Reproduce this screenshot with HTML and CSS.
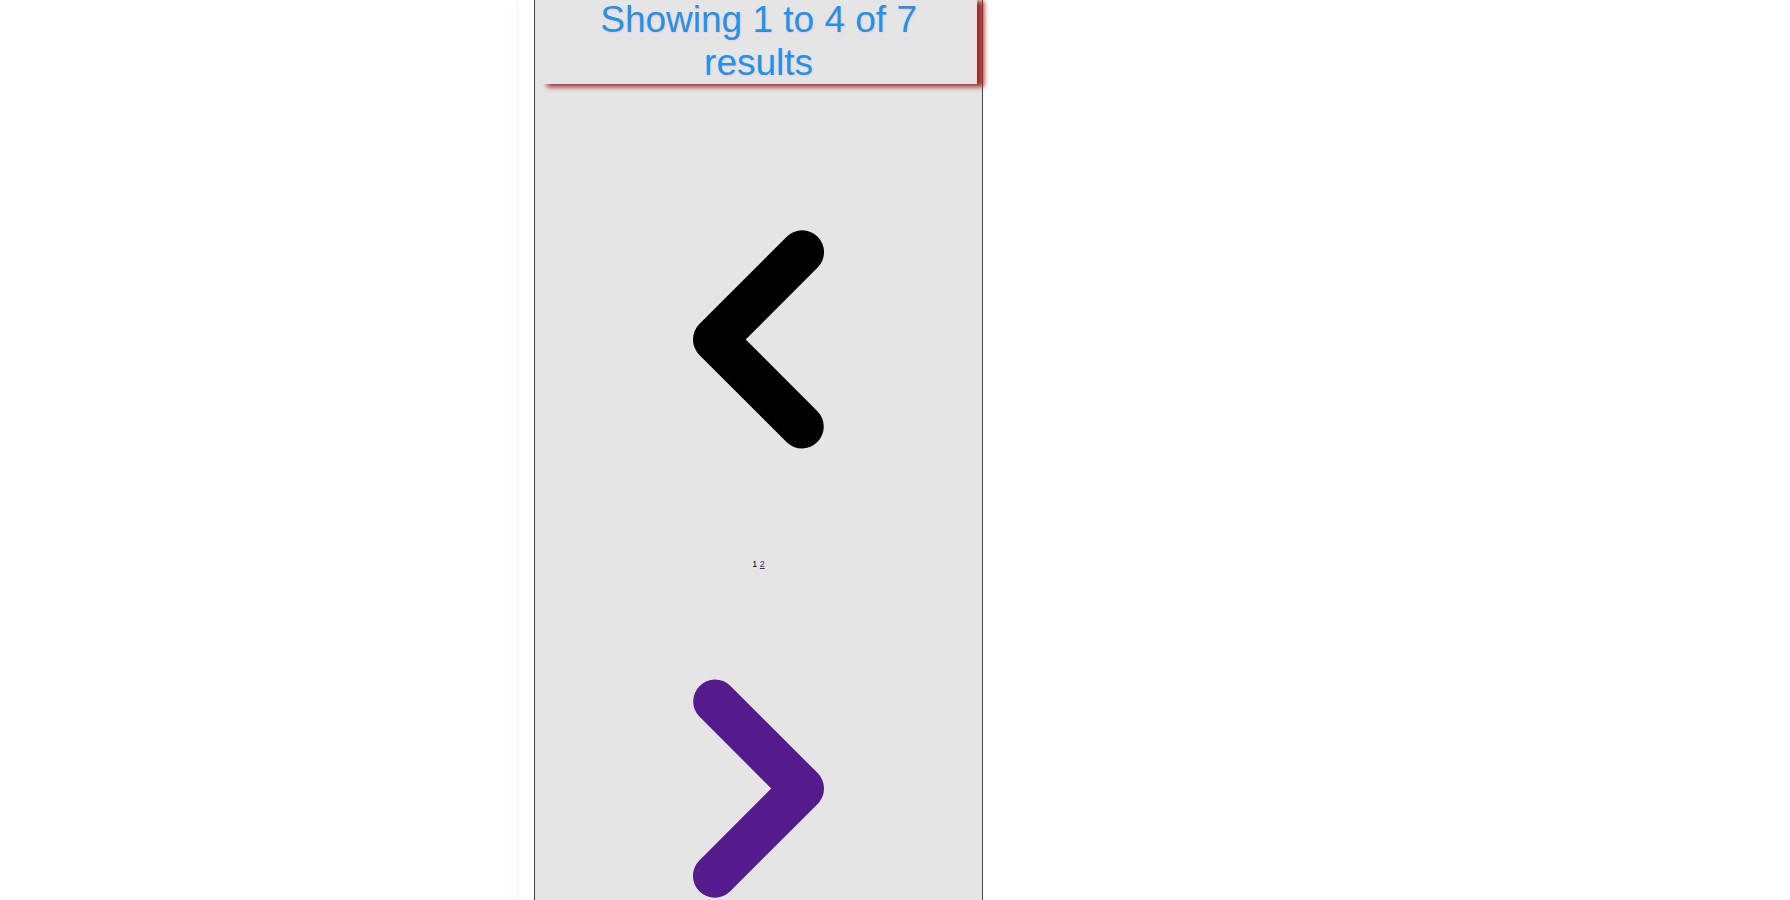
FILE: index.html
```html
<!DOCTYPE html>
<html lang="en">
<head>
<meta charset="utf-8">
<title>Results</title>
<link rel="stylesheet" href="styles.css">
</head>
<body>
<main class="page">
<nav class="pagination" aria-label="Pagination">
<p class="summary">Showing 1 to 4 of 7 results</p>
<span class="arrow" aria-disabled="true"><svg viewBox="0 0 20 20" fill="currentColor" aria-hidden="true"><path d="M12.707 5.293a1 1 0 010 1.414L9.414 10l3.293 3.293a1 1 0 01-1.414 1.414l-4-4a1 1 0 010-1.414l4-4a1 1 0 011.414 0z"/></svg></span>
<div class="numbers"><span aria-current="page">1</span> <a class="link" href="#page-2">2</a></div>
<a class="arrow link" href="#page-2" aria-label="Next"><svg viewBox="0 0 20 20" fill="currentColor" aria-hidden="true"><path d="M7.293 14.707a1 1 0 010-1.414L10.586 10 7.293 6.707a1 1 0 011.414-1.414l4 4a1 1 0 010 1.414l-4 4a1 1 0 01-1.414 0z"/></svg></a>
</nav>
</main>
</body>
</html>
```
FILE: styles.css
```css
body {
  margin: 0;
  height: 100vh;
  overflow: hidden;
  background: #fff;
  font-family: "Liberation Sans", Arial, sans-serif;
}
.page {
  min-height: 100vh;
  margin-left: 29%;
  padding-left: 15px;
  background: #fff;
  box-shadow: 0 0 10px rgba(0, 0, 0, 0.06);
}
.page::before { content: ""; display: table; }
.pagination {
  box-sizing: border-box;
  width: 100%;
  max-width: 449px;
  padding: 0 5px;
  border: 1px solid #444;
  border-top: 0;
  background: #e5e5e5;
  text-align: center;
}
.summary {
  margin: -2px 0 37px;
  padding: 0 10px;
  color: #1c94e9;
  font-size: 37px;
  line-height: 43px;
  text-shadow: 1px 1px 2px pink;
  box-shadow: 7px 3px 5px brown;
  background: #e5e5e5;
}
.arrow { display: block; color: #000; }
.arrow svg { display: block; width: 100%; }
.numbers { font-size: 9px; line-height: 12px; }
.link { color: #551a8b; }
.arrow.link { color: #551a8b; }
```
